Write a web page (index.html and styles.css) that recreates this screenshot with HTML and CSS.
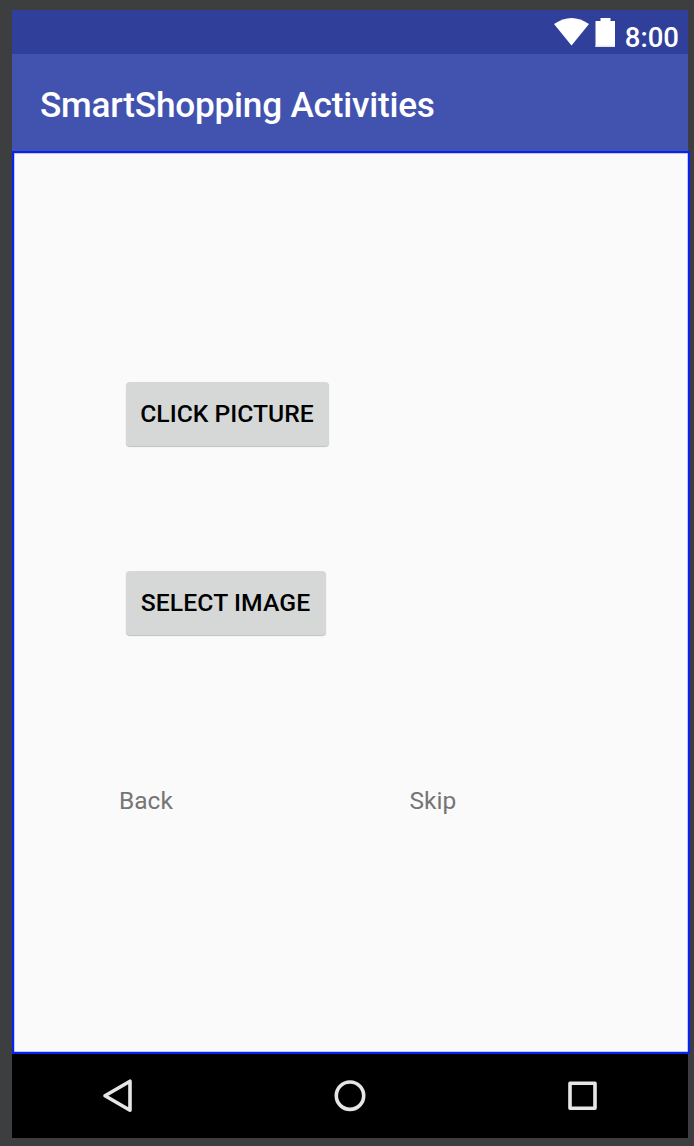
FILE: index.html
```html
<!DOCTYPE html>
<html lang="en">
<head>
<meta charset="utf-8">
<title>SmartShopping Activities</title>
<link rel="stylesheet" href="styles.css">
</head>
<body>
<div class="device">
  <header class="status-bar">
    <svg class="status-icons" width="62" height="30" viewBox="0 0 62 30">
      <path fill="#fff" d="M0 6Q17.5-6 35 6L17.5 27.5Z"/>
      <path fill="#fff" d="M41.5 3h5V0h10v3h4.5v26H41.5Z"/>
      <path fill="#e4e5ef" d="M41.5 27.5H61V29H41.5Z"/>
    </svg>
    <span class="clock">8:00</span>
  </header>
  <div class="app-bar"><h1 class="title">SmartShopping Activities</h1></div>
  <main class="content">
    <button class="btn btn-click"><span>CLICK PICTURE</span></button>
    <button class="btn btn-select"><span>SELECT IMAGE</span></button>
    <div class="links"><span class="back">Back</span><span class="skip">Skip</span></div>
  </main>
  <nav class="nav-bar">
    <svg width="676" height="84" viewBox="0 0 676 84" fill="none" stroke="#e6e6e6" stroke-width="3.6" stroke-linejoin="round">
      <path d="M118 27.2V56.2L93 41.7Z"/>
      <circle cx="338" cy="41.7" r="13.7"/>
      <rect x="558" y="29.2" width="25" height="25"/>
    </svg>
  </nav>
</div>
</body>
</html>
```
FILE: styles.css
```css
body {
  display: flow-root;
  margin: 0;
  height: 1146px;
  background: #3c3e3f;
  font-family: Roboto, "Liberation Sans", sans-serif;
  overflow: hidden;
}
.device {
  width: 676px;
  height: 1128px;
  margin: 10px 0 0 12px;
  display: flow-root;
  background: #000;
}
.status-bar {
  height: 44px;
  box-sizing: border-box;
  padding: 8px 9px 0 0;
  display: flex;
  justify-content: flex-end;
  background: #303f9a;
  color: #fff;
}
.status-icons { margin-right: 8.5px; }
.clock {
  font-size: 27.5px;
  line-height: 32px;
  font-weight: 500;
  margin-top: 4px;
}
.app-bar {
  height: 97px;
  display: flex;
  align-items: center;
  padding: 0 0 0 28px;
  background: #4253af;
}
.title {
  margin: 5px 0 0;
  font-size: 35.2px;
  font-weight: 500;
  line-height: 42px;
  letter-spacing: -0.22px;
  color: #fff;
  white-space: nowrap;
}
.content {
  box-sizing: border-box;
  width: 678px;
  height: 903px;
  padding: 229px 0 0 111.5px;
  display: flex;
  flex-direction: column;
  align-items: flex-start;
  border: 2px solid #0822f0;
  background: #fafafa;
  box-shadow: inset 0 0 0 0.5px #8a94e8;
}
.btn {
  height: 64px;
  padding: 0;
  border: 0;
  border-radius: 4px;
  background: #d6d8d7;
  box-shadow: 0 1px 1px rgba(0, 0, 0, .24);
  color: #000;
  font: 500 24.7px/64px Roboto, sans-serif;
  white-space: nowrap;
}
.btn-click { width: 203px; }
.btn-select { width: 200px; margin-top: 124.5px; letter-spacing: 0.1px; }
.links {
  display: flex;
  margin: 151.5px 0 0 -6.5px;
  font-size: 24.5px;
  line-height: 30px;
  color: #757575;
}
.back { width: 290.5px; }
.nav-bar { height: 84px; background: #000; }
.nav-bar svg { display: block; }
```
